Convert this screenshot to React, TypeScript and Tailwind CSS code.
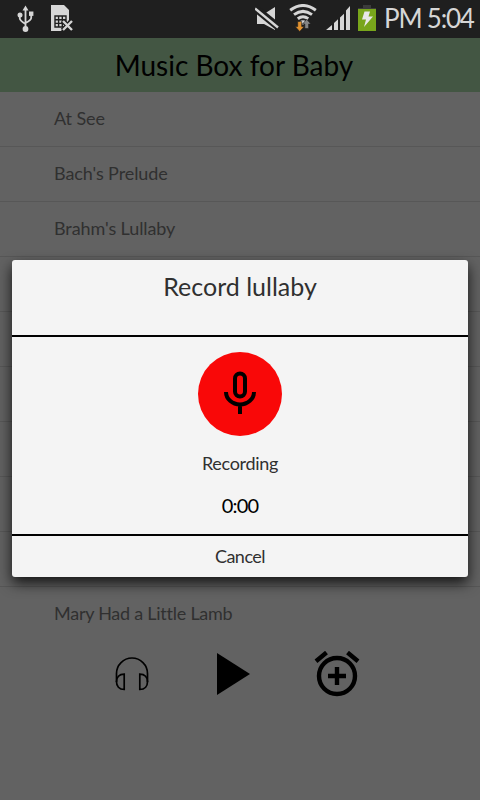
import { clsx } from 'clsx'

const SONGS = ['At See', "Bach's Prelude", "Brahm's Lullaby", '', '', '', '', '', '', 'Mary Had a Little Lamb']

function UsbIcon() {
  return (
    <svg width="18" height="28" viewBox="0 0 18 28" fill="none" stroke="#d6d6d6" strokeWidth="1.8">
      <path d="M8.5 5v19M2.8 10v3.5q0 2 5.7 5.5M14.2 9v4q0 2-5.7 5" />
      <path d="M8.5 0.5l3 5h-6z" fill="#d6d6d6" stroke="none" />
      <circle cx="3" cy="10" r="2.5" fill="#d6d6d6" stroke="none" />
      <rect x="12" y="6.5" width="4.4" height="4.4" fill="#d6d6d6" stroke="none" />
      <circle cx="8.5" cy="24" r="2.9" fill="#d6d6d6" stroke="none" />
    </svg>
  )
}

function SimErrorIcon() {
  return (
    <svg width="22" height="27" viewBox="0 0 22 27" fill="none">
      <path d="M0 0h13l5 5v10l-8 11H0z" fill="#d6d6d6" />
      <path d="M4 11h11v11H4zM4 14.7h11M4 18.4h11M7.6 11v11M11.3 11v11" stroke="#1f1f1f" strokeWidth="1.4" />
      <path d="M11.5 15.5l10 10M21.5 15.5l-10 10" stroke="#1f1f1f" strokeWidth="4.6" />
      <path d="M12 16l9 9M21 16l-9 9" stroke="#d6d6d6" strokeWidth="2.4" />
    </svg>
  )
}

function MuteIcon() {
  return (
    <svg width="24" height="24" viewBox="0 0 24 24" fill="none">
      <path d="M2 7h7L20 0v23L9 17H2z" fill="#d6d6d6" />
      <path d="M-1 0.200l25 20.500" stroke="#1f1f1f" strokeWidth="7.500" />
      <path d="M0 1.500l23 19" stroke="#d6d6d6" strokeWidth="2.400" />
    </svg>
  )
}

function WifiIcon() {
  return (
    <svg width="28" height="28" viewBox="0 0 28 28" fill="none">
      <path d="M1.2 6.200q12.800-9.400 25.600 0M5 10.600q9-6.500 18 0M8.800 14.800q5.200-4 10.400 0" stroke="#d6d6d6" strokeWidth="3" />
      <path d="M10.500 17.500q3.500-2.500 7 0L14 21z" fill="#d6d6d6" />
      <path d="M8.700 17.500h4v5h2.500l-4.500 5-4.500-5h2.500z" fill="#e0912f" stroke="#1f1f1f" strokeWidth=".6" />
      <path d="M15.800 24.500v-4.500h-2.300l4.200-4.700 4.200 4.700h-2.300v4.500z" fill="#858585" stroke="#1f1f1f" strokeWidth=".6" />
    </svg>
  )
}

function SignalIcon() {
  return (
    <svg width="25" height="24" viewBox="0 0 25 24" fill="#d6d6d6">
      <path d="M0 24l6-5V24zM8 24v-7l4-3.800V24zM14 24V11.500l4-3.800V24zM20 24V4.500l4-4.500v24z" />
    </svg>
  )
}

function BatteryIcon() {
  return (
    <svg width="18" height="26" viewBox="0 0 18 26">
      <path d="M5 0h8v3h5v1H0V3h5z" fill="#3b3b3b" />
      <path d="M0 4h18v22H0z" fill="#78a51b" />
      <path d="M6.500 6.500h5.500l-1.500 5h4.500L6 22l2-7.500H4z" fill="#e8e8e8" />
    </svg>
  )
}

function StatusBar() {
  return (
    <div className="flex h-[38px] items-start bg-[#1f1f1f] text-[#d6d6d6]">
      <div className="mt-[5px] ml-[17px]"><UsbIcon /></div>
      <div className="mt-[5px] ml-4"><SimErrorIcon /></div>
      <div className="mt-[7px] ml-auto"><MuteIcon /></div>
      <div className="mt-[4px] ml-[10px]"><WifiIcon /></div>
      <div className="mt-[6px] ml-[9px]"><SignalIcon /></div>
      <div className="mt-[5px] ml-[7px]"><BatteryIcon /></div>
      <div className="ml-[8px] w-[96px] text-[26px] leading-[36px] tracking-[-1.2px] whitespace-nowrap">PM 5:04</div>
    </div>
  )
}

function SongList() {
  return (
    <ul>
      {SONGS.map((song, i) => (
        <li
          key={i}
          className={clsx(
            'flex h-[55px] items-center pb-0.5 pl-[54px] text-[18px] tracking-[-0.1px] text-[#303030]',
            i < SONGS.length - 1 && 'border-b border-[#575757]',
            song.length > 20 && 'tracking-[-0.25px]!',
          )}
        >
          {song}
        </li>
      ))}
    </ul>
  )
}

function PlayerControls() {
  return (
    <div className="flex pt-[7px] pl-[115px]">
      <svg className="mt-[8px]" width="34" height="34" viewBox="0 0 34 34" fill="none" stroke="#000" strokeWidth="1.7">
        <path d="M1.500 25V16.500a15.500 15.500 0 0 1 31 0V25" />
        <path d="M9.200 17.200v15.300C4 32.500 1.500 29 1.500 24.800S4 17.200 9.200 17.200zM24.800 17.200v15.300c5.200 0 7.700-3.500 7.700-7.700s-2.500-7.600-7.700-7.600z" />
      </svg>
      <svg className="mt-[4px] ml-[68px]" width="33" height="42" viewBox="0 0 33 42">
        <path d="M0 0l33 21L0 42z" />
      </svg>
      <svg className="mt-[2px] ml-[64px]" width="46" height="46" viewBox="0 0 46 46" fill="none" stroke="#000" strokeWidth="4.400">
        <circle cx="23" cy="25" r="18" />
        <path d="M23 16v18M14 25h18M2 10.300L12.500 1.500M44 10.300L33.500 1.500" />
      </svg>
    </div>
  )
}

function RecordDialog() {
  return (
    <div className="absolute top-[260px] left-3 flex h-[317px] w-[456px] flex-col rounded-[3px] bg-[#f4f4f4] text-center text-[#303030] shadow-[0_6px_14px_0px_rgba(0,0,0,0.8)]">
      <h2 className="h-[75px] pt-2 text-[25px] leading-[36px]">Record lullaby</h2>
      <div className="flex h-[201px] flex-col items-center border-y-2 border-black pt-[15px]">
        <div className="flex size-[84px] items-center justify-center rounded-full bg-[#f90808]">
          <svg width="34" height="48" viewBox="0 0 34 48" fill="none" stroke="#000" strokeWidth="4">
            <rect x="12" y="3.500" width="10" height="23" rx="5" />
            <path d="M3 22a14 12.500 0 0 0 28 0M17 34v10" />
          </svg>
        </div>
        <p className="mt-[13px] text-[18px] leading-7 tracking-[-0.3px]">Recording</p>
        <p className="mt-[14px] text-[20px] leading-7 tracking-[-0.8px] text-black">0:00</p>
      </div>
      <button className="h-[41px] text-[18px] tracking-[-0.5px]">Cancel</button>
    </div>
  )
}

export default function App() {
  return (
    <div className="relative h-[800px] w-[480px] overflow-hidden bg-[#626262] font-['Lato',sans-serif]">
      <StatusBar />
      <header className="h-[54px] bg-[#435643] pr-3 text-center text-[28px] leading-[54px] text-black">Music Box for Baby</header>
      <SongList />
      <PlayerControls />
      <RecordDialog />
    </div>
  )
}
